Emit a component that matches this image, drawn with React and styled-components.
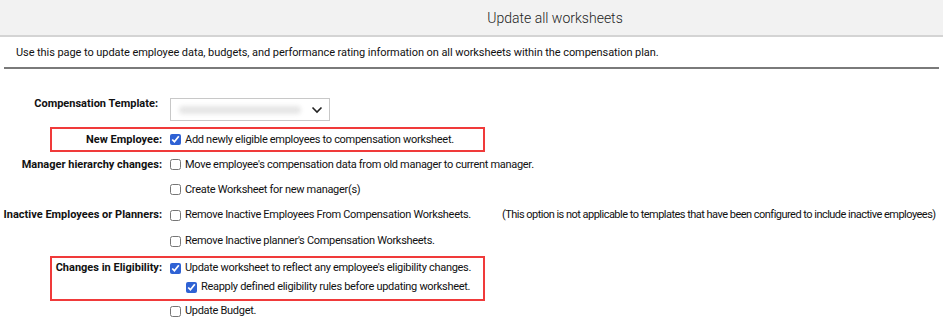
import React from 'react';
import styled, { createGlobalStyle } from 'styled-components';

const GlobalStyle = createGlobalStyle`
  body {
    margin: 0;
    background: #fff;
    font-family: Roboto, "Liberation Sans", sans-serif;
    color: #111;
  }
`;

const Page = styled.div`
  width: 943px;
`;

const Header = styled.header`
  height: 35px;
  background: #f2f2f2;
  border-bottom: 2px solid #d4d4d4;
  display: flex;
  align-items: center;
  justify-content: center;
  padding-left: 167px;
  box-sizing: content-box;
`;

const Title = styled.h1`
  margin: 0;
  font-size: 14px;
  font-weight: 300;
  color: #222;
`;

const Intro = styled.p`
  margin: 0 4px;
  padding: 9px 12px 7px;
  font-size: 11px;
  line-height: 14px;
  letter-spacing: -0.07px;
  border-bottom: 2px solid #7a7a7a;
`;

const Form = styled.div`
  padding-top: 28px;
  display: flex;
  flex-direction: column;
`;

const Row = styled.div`
  display: grid;
  grid-template-columns: ${(p) => (p.$inset ? '110px' : '162px')} 1fr;
  column-gap: 8px;
  align-items: ${(p) => p.$align || 'center'};
  min-height: ${(p) => p.$h || 25}px;
`;

const Label = styled.div`
  text-align: right;
  font-weight: 700;
  font-size: 11px;
  line-height: 14px;
  white-space: nowrap;
  padding-right: ${(p) => p.$pr || 0}px;
`;

const Highlight = styled.div`
  margin-left: 50px;
  margin-top: ${(p) => p.$mt || 0}px;
  width: 431px;
  border: 2px solid #f03a3a;
  padding: ${(p) => p.$pad || '1px 0'};
`;

const Option = styled.label`
  display: flex;
  align-items: center;
  gap: 4px;
  font-size: 11px;
  line-height: 14px;
  letter-spacing: -0.3px;
  white-space: nowrap;
  padding-left: ${(p) => (p.$sub ? 16 : 0)}px;
`;

const Check = styled.input.attrs({ type: 'checkbox' })`
  margin: 0;
  width: 11px;
  height: 11px;
  accent-color: #2f62d4;
`;

const Note = styled.span`
  margin-left: 27px;
  letter-spacing: -0.52px;
`;

const Select = styled.div`
  width: 160px;
  height: 23px;
  margin-top: 1px;
  box-sizing: border-box;
  border: 1px solid #c8c8c8;
  display: flex;
  align-items: center;
  justify-content: space-between;
  padding: 0 6px 0 8px;
`;

const Blur = styled.div`
  width: 122px;
  height: 8px;
  border-radius: 4px;
  background: #e6e6e6;
  filter: blur(2px);
`;

const Chevron = () => (
  <svg width="12" height="8" viewBox="0 0 12 8" fill="none">
    <path d="M1.5 1.5 6 6l4.5-4.5" stroke="#222" strokeWidth="1.6" />
  </svg>
);

const Stack = styled.div`
  display: flex;
  flex-direction: column;
  gap: 5px;
`;

export default function App() {
  return (
    <Page>
      <GlobalStyle />
      <Header>
        <Title>Update all worksheets</Title>
      </Header>
      <Intro>
        Use this page to update employee data, budgets, and performance rating
        information on all worksheets within the compensation plan.
      </Intro>
      <Form>
        <Row $h={24} $align="start">
          <Label $pr={4}>Compensation Template:</Label>
          <Select>
            <Blur />
            <Chevron />
          </Select>
        </Row>
        <Highlight $mt={6}>
          <Row $inset $h={19}>
            <Label>New Employee:</Label>
            <Option>
              <Check defaultChecked />
              Add newly eligible employees to compensation worksheet.
            </Option>
          </Row>
        </Highlight>
        <Row>
          <Label>Manager hierarchy changes:</Label>
          <Option>
            <Check />
            Move employee's compensation data from old manager to current manager.
          </Option>
        </Row>
        <Row>
          <Label />
          <Option>
            <Check />
            Create Worksheet for new manager(s)
          </Option>
        </Row>
        <Row $h={26}>
          <Label>Inactive Employees or Planners:</Label>
          <Option>
            <Check />
            Remove Inactive Employees From Compensation Worksheets.
            <Note>
              (This option is not applicable to templates that have been
              configured to include inactive employees)
            </Note>
          </Option>
        </Row>
        <Row $h={26}>
          <Label />
          <Option>
            <Check />
            Remove Inactive planner's Compensation Worksheets.
          </Option>
        </Row>
        <Highlight $mt={2} $pad="3px 0 5px">
          <Row $inset $h={33} $align="start">
            <Label>Changes in Eligibility:</Label>
            <Stack>
              <Option>
                <Check defaultChecked />
                Update worksheet to reflect any employee's eligibility changes.
              </Option>
              <Option $sub>
                <Check defaultChecked />
                Reapply defined eligibility rules before updating worksheet.
              </Option>
            </Stack>
          </Row>
        </Highlight>
        <Row $h={20}>
          <Label />
          <Option>
            <Check />
            Update Budget.
          </Option>
        </Row>
      </Form>
    </Page>
  );
}
